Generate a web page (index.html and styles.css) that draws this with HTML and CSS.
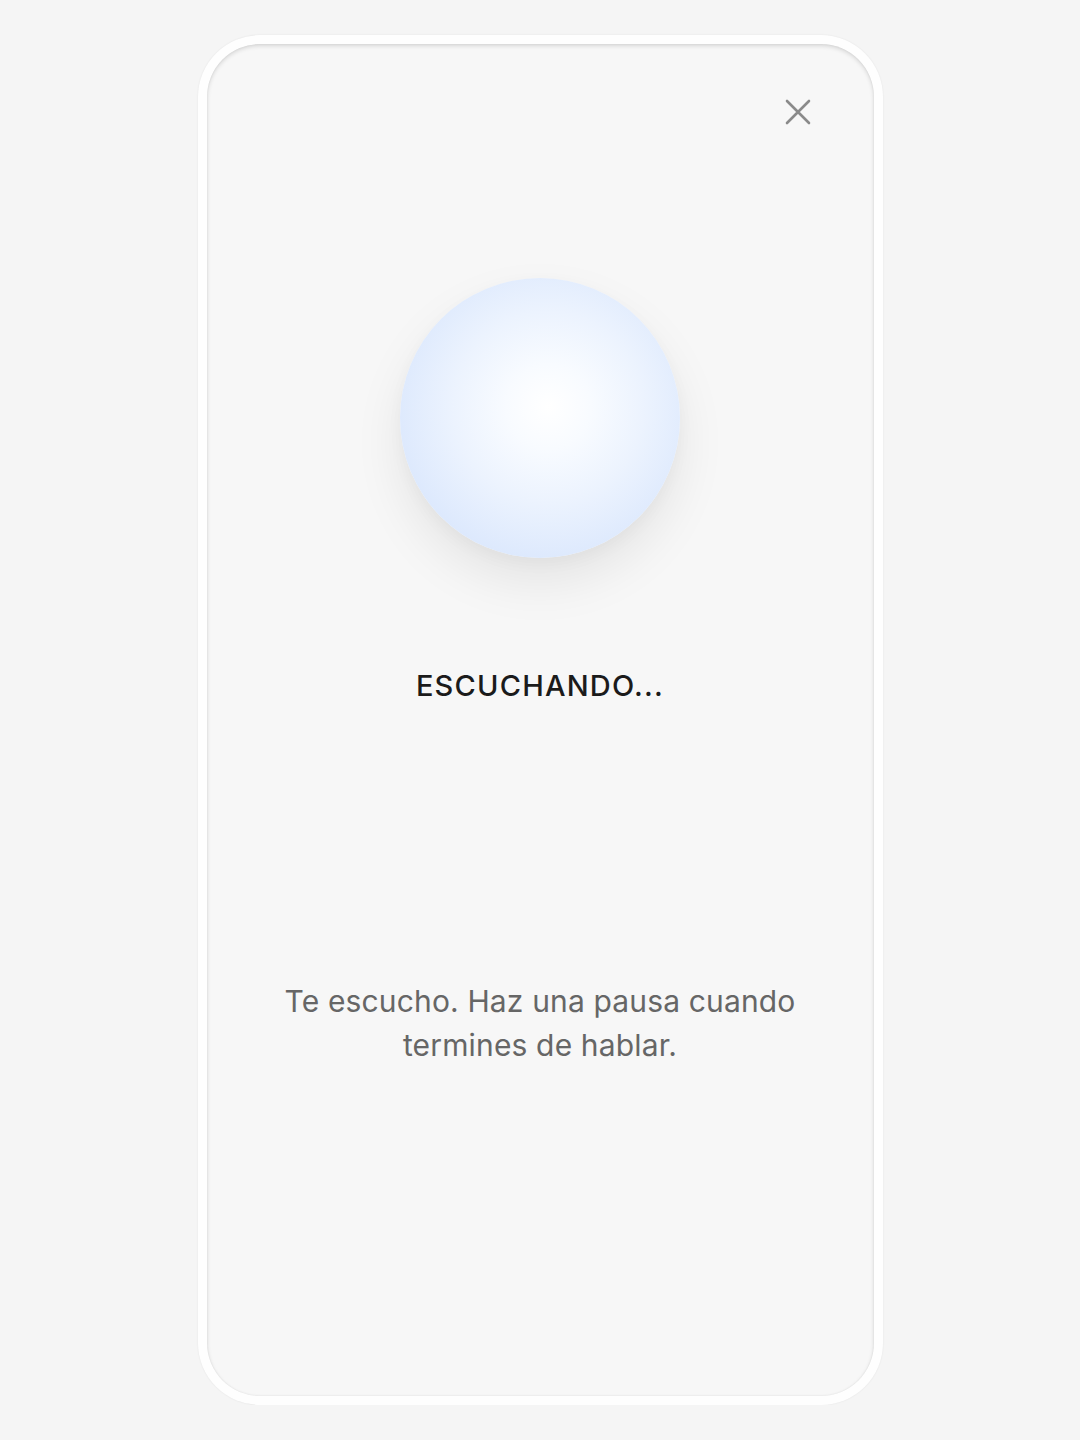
FILE: index.html
```html
<!DOCTYPE html>
<html lang="es">
<head>
<meta charset="utf-8">
<title>Escuchando</title>
<link rel="stylesheet" href="styles.css">
</head>
<body>
<div class="frame">
  <div class="screen">
    <div class="top-bar">
      <button class="close" aria-label="Cerrar">
        <svg width="26" height="26" viewBox="0 0 26 26" fill="none" stroke="#8a8a8a" stroke-width="2.6" stroke-linecap="round">
          <path d="M2 2 L24 24 M24 2 L2 24"/>
        </svg>
      </button>
    </div>
    <div class="orb"></div>
    <div class="status">ESCUCHANDO...</div>
    <p class="hint">Te escucho. Haz una pausa cuando<br>termines de hablar.</p>
  </div>
</div>
</body>
</html>
```

FILE: styles.css
```css
html, body {
  margin: 0;
  padding: 0;
  background: #f5f5f5;
}
body {
  font-family: Inter, "Noto Sans", "Liberation Sans", sans-serif;
  padding-top: 35px;
}
.frame {
  box-sizing: border-box;
  width: 685px;
  height: 1370px;
  margin: 0 auto;
  padding: 9px;
  border-radius: 62px;
  background: #fefefe;
  box-shadow: 0 0 2px rgba(0,0,0,0.08);
}
.screen {
  box-sizing: border-box;
  height: 100%;
  border-radius: 53px;
  background: #f7f7f7;
  box-shadow: inset 0 2px 4px rgba(0,0,0,0.13), inset 0 0 2px rgba(0,0,0,0.08);
  display: flex;
  flex-direction: column;
  align-items: center;
}
.top-bar {
  align-self: stretch;
  display: flex;
  justify-content: flex-end;
  padding: 55px 63px 0 0;
}
.close {
  width: 26px;
  height: 26px;
  padding: 0;
  border: 0;
  background: none;
  display: block;
}
.close svg { display: block; }
.orb {
  width: 280px;
  height: 280px;
  margin-top: 153px;
  border-radius: 50%;
  background: radial-gradient(circle at 53% 46%, #ffffff 0%, #f8fbff 20%, #ecf3fe 45%, #dde9fd 72%, #d2e2fb 100%);
  box-shadow: 0 24px 50px rgba(0,0,0,0.08), 0 6px 16px rgba(0,0,0,0.03);
}
.status {
  margin-top: 110px;
  font-size: 29px;
  line-height: 36px;
  font-weight: 500;
  letter-spacing: 1.2px;
  color: #1b1b1b;
}
.hint {
  margin: 275px 0 0;
  font-size: 30px;
  line-height: 44px;
  letter-spacing: 0.15px;
  color: #666666;
  text-align: center;
}
```
